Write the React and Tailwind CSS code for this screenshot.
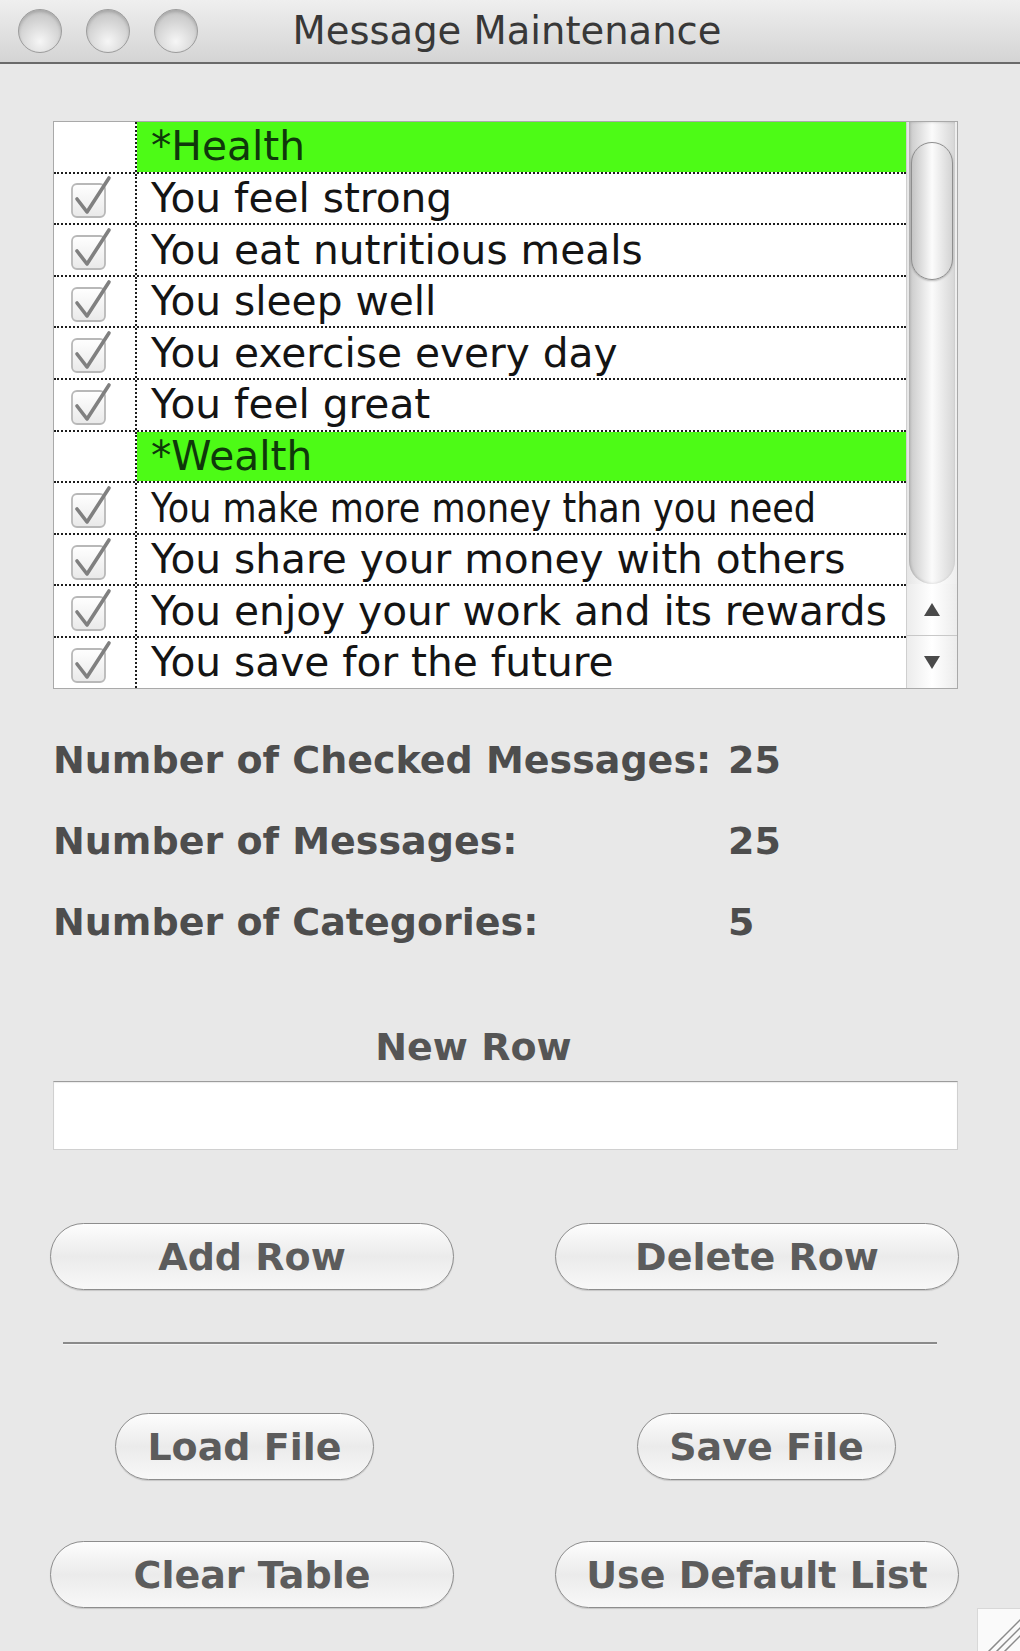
import React from "react";

const rows = [
  { cat: true, text: "*Health" },
  { text: "You feel strong" },
  { text: "You eat nutritious meals" },
  { text: "You sleep well" },
  { text: "You exercise every day" },
  { text: "You feel great" },
  { cat: true, text: "*Wealth" },
  { text: "You make more money than you need", narrow: true },
  { text: "You share your money with others" },
  { text: "You enjoy your work and its rewards" },
  { text: "You save for the future" },
];

function Check() {
  return (
    <svg width="42" height="46" viewBox="0 0 42 46" className="block">
      <defs>
        <linearGradient id="cbg" x1="0" y1="0" x2="0" y2="1">
          <stop offset="0" stopColor="#ffffff" />
          <stop offset="1" stopColor="#e9e9e9" />
        </linearGradient>
      </defs>
      <rect x="1" y="9" width="33" height="33" rx="5" fill="url(#cbg)" stroke="#b8b8b8" strokeWidth="1.8" />
      <path d="M6 24 L16 37 L38 3" fill="none" stroke="#808080" strokeWidth="3.6" strokeLinecap="round" strokeLinejoin="round" />
    </svg>
  );
}

function Light() {
  return (
    <div className="w-[44px] h-[44px] rounded-full border border-[#9c9c9c] bg-[radial-gradient(circle_at_50%_75%,#f6f6f6_0%,#d4d4d4_55%,#b8b8b8_100%)] shadow-[inset_0_2px_3px_rgba(0,0,0,0.15)]" />
  );
}

function Btn({ children, w }) {
  return (
    <div
      className={`${w} h-[67px] rounded-full border-[1.5px] border-[#8d8d8d] bg-linear-to-b from-[#fdfdfd] via-[#ebebeb] to-[#f8f8f8] shadow-[0_1px_1px_rgba(0,0,0,0.15)] flex items-center justify-center text-[38px] font-bold text-[#5c5c5c] leading-none`}
      style={{ fontFamily: '"DejaVu Sans", sans-serif' }}
    >
      {children}
    </div>
  );
}

export default function App() {
  return (
    <div
      className="relative w-[1020px] h-[1651px] overflow-hidden bg-[#e8e8e8]"
      style={{ fontFamily: '"DejaVu Sans", sans-serif' }}
    >
      {/* Title bar */}
      <div className="relative h-[64px] bg-linear-to-b from-[#efefef] to-[#d4d4d4] border-b-2 border-[#6a6a6a] flex items-center">
        <div className="flex gap-[24px] pl-[18px]">
          <Light />
          <Light />
          <Light />
        </div>
        <div className="absolute inset-0 flex items-center justify-center pr-[6px] text-[38.5px] text-[#383838] pointer-events-none">
          Message Maintenance
        </div>
      </div>

      <div className="pl-[53px] pr-[62px]">
        {/* Table */}
        <div className="mt-[57px] h-[568px] border border-[#a9a9a9] bg-white flex overflow-hidden">
          <div className="flex-1 min-w-0 flex flex-col">
            {rows.map((r, i) => (
              <div key={i} className="flex h-[51.6px] shrink-0 border-b-2 border-dotted border-[#1e1e1e]">
                <div className="w-[83px] shrink-0 border-r-2 border-dotted border-[#1e1e1e] flex items-center pl-[17px]">
                  {!r.cat && <Check />}
                </div>
                <div
                  className={`flex-1 min-w-0 overflow-hidden flex items-center pl-[14px] text-[40.7px] leading-none whitespace-nowrap ${
                    r.cat ? "bg-[#4dfb16] text-[#0f380b]" : "text-[#141414]"
                  }`}
                >
                  {r.narrow ? (
                    <span className="inline-block origin-left scale-x-[0.86]">{r.text}</span>
                  ) : (
                    r.text
                  )}
                </div>
              </div>
            ))}
          </div>
          {/* Scrollbar */}
          <div className="w-[51px] shrink-0 flex flex-col bg-[#f7f7f7] border-l border-[#cfcfcf]">
            <div className="h-[462px] shrink-0 px-[2px] bg-linear-to-r from-[#e6e6e6] via-white to-[#eeeeee]">
              <div className="h-full rounded-b-full bg-linear-to-r from-[#c9c9c9] via-[#fbfbfb] to-[#d6d6d6] shadow-[inset_1px_0_3px_rgba(0,0,0,0.18)] pt-[20px] px-[2px]">
                <div className="h-[138px] rounded-full border-[1.5px] border-[#8e8e8e] bg-linear-to-r from-[#c4c4c4] via-[#fcfcfc] to-[#d4d4d4] shadow-[0_1px_2px_rgba(0,0,0,0.25)]" />
              </div>
            </div>
            <div className="h-[52px] shrink-0 flex items-center justify-center border-b border-[#c8c8c8] bg-linear-to-r from-[#ececec] via-white to-[#ececec]">
              <svg width="18" height="15" viewBox="0 0 18 15">
                <path d="M9 1 L17 14 L1 14 Z" fill="#4a4a4a" />
              </svg>
            </div>
            <div className="flex-1 flex items-center justify-center bg-linear-to-r from-[#ececec] via-white to-[#ececec]">
              <svg width="18" height="15" viewBox="0 0 18 15">
                <path d="M1 1 L17 1 L9 14 Z" fill="#4a4a4a" />
              </svg>
            </div>
          </div>
        </div>

        {/* Stats */}
        <div className="mt-[31px] text-[38px] font-bold text-[#4d4d4d]">
          <div className="h-[81px] flex items-center">
            <span className="w-[675px]">Number of Checked Messages:</span>
            <span>25</span>
          </div>
          <div className="h-[81px] flex items-center">
            <span className="w-[675px]">Number of Messages:</span>
            <span>25</span>
          </div>
          <div className="h-[81px] flex items-center">
            <span className="w-[675px]">Number of Categories:</span>
            <span>5</span>
          </div>
        </div>

        {/* New Row */}
        <div className="mt-[60px] h-[48px] flex items-center justify-center text-[38px] font-bold text-[#555555] pr-[64px]">
          New Row
        </div>
        <div className="mt-[10px] h-[69px] bg-white border border-[#d0d0d0] border-t-[#9c9c9c] shadow-[inset_0_1px_1px_rgba(0,0,0,0.08)]" />

        {/* Add / Delete */}
        <div className="mt-[73px] -ml-[3px] -mr-[1px] flex justify-between">
          <Btn w="w-[404px]">Add Row</Btn>
          <Btn w="w-[404px]">Delete Row</Btn>
        </div>

        {/* Separator */}
        <div className="mt-[52px] ml-[10px] mr-[21px] h-[2px] bg-[#8a8a8a] border-b border-[#f4f4f4] box-content" />

        {/* Load / Save */}
        <div className="mt-[68px] px-[62px] flex justify-between">
          <Btn w="w-[259px]">Load File</Btn>
          <Btn w="w-[259px]">Save File</Btn>
        </div>

        {/* Clear / Default */}
        <div className="mt-[61px] -ml-[3px] -mr-[1px] flex justify-between">
          <Btn w="w-[404px]">Clear Table</Btn>
          <Btn w="w-[404px]">Use Default List</Btn>
        </div>
      </div>

      {/* Resize grip */}
      <div className="absolute right-0 bottom-0 w-[43px] h-[43px] bg-[#fafafa] border-l border-t border-[#d8d8d8]">
        <svg width="43" height="43" viewBox="0 0 43 43" className="block">
          <path d="M10 43 L43 10" stroke="#8a8a8a" strokeWidth="1.5" />
          <path d="M18 43 L43 18" stroke="#8a8a8a" strokeWidth="1.5" />
          <path d="M26 43 L43 26" stroke="#8a8a8a" strokeWidth="1.5" />
        </svg>
      </div>
    </div>
  );
}
